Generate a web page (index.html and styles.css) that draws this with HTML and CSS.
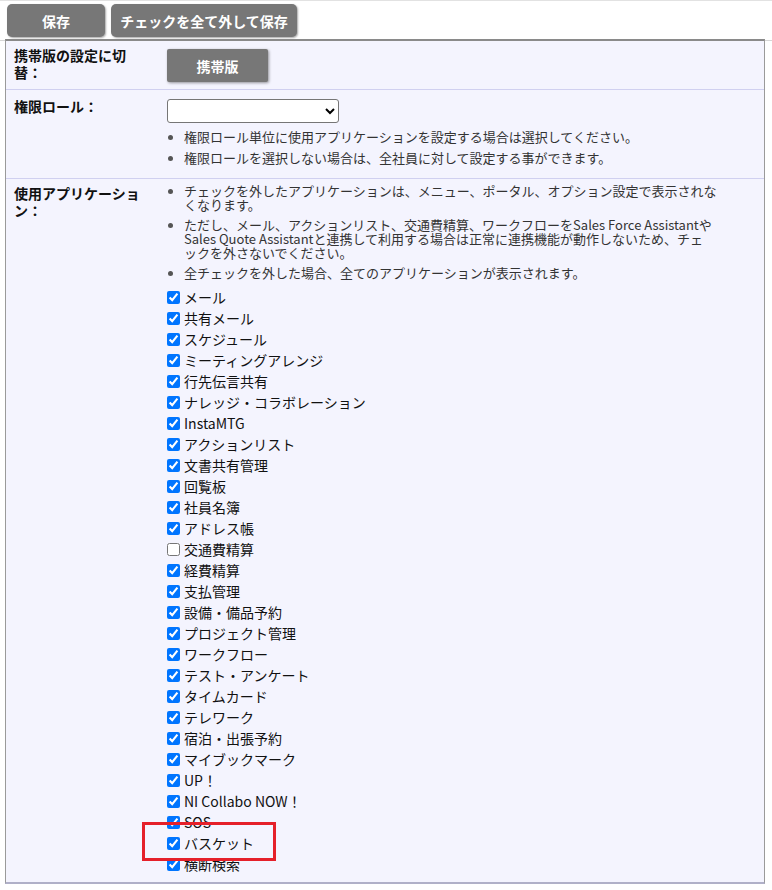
FILE: index.html
```html
<!DOCTYPE html>
<html lang="ja">
<head>
<meta charset="utf-8">
<title>アプリケーション設定</title>
<link rel="stylesheet" href="styles.css">
</head>
<body>
<div class="page">
  <div class="toolbar">
    <button class="btn btn-save" type="button">保存</button>
    <button class="btn btn-clear" type="button">チェックを全て外して保存</button>
  </div>
  <div class="form">
    <div class="row row-mobile">
      <div class="label">携帯版の設定に切替：</div>
      <div class="value">
        <button class="btn btn-mobile" type="button">携帯版</button>
      </div>
    </div>
    <div class="row row-role">
      <div class="label">権限ロール：</div>
      <div class="value">
        <select class="role-select"><option></option></select>
        <ul class="notes">
          <li>権限ロール単位に使用アプリケーションを設定する場合は選択してください。</li>
          <li>権限ロールを選択しない場合は、全社員に対して設定する事ができます。</li>
        </ul>
      </div>
    </div>
    <div class="row row-apps">
      <div class="label">使用アプリケーション：</div>
      <div class="value">
        <ul class="notes notes-apps">
          <li>チェックを外したアプリケーションは、メニュー、ポータル、オプション設定で表示されな<br>くなります。</li>
          <li>ただし、メール、アクションリスト、交通費精算、ワークフローをSales Force Assistantや<br>Sales Quote Assistantと連携して利用する場合は正常に連携機能が動作しないため、チェ<br>ックを外さないでください。</li>
          <li>全チェックを外した場合、全てのアプリケーションが表示されます。</li>
        </ul>
        <ul class="apps">
          <li><label><input type="checkbox" checked>メール</label></li>
          <li><label><input type="checkbox" checked>共有メール</label></li>
          <li><label><input type="checkbox" checked>スケジュール</label></li>
          <li><label><input type="checkbox" checked>ミーティングアレンジ</label></li>
          <li><label><input type="checkbox" checked>行先伝言共有</label></li>
          <li><label><input type="checkbox" checked>ナレッジ・コラボレーション</label></li>
          <li><label><input type="checkbox" checked>InstaMTG</label></li>
          <li><label><input type="checkbox" checked>アクションリスト</label></li>
          <li><label><input type="checkbox" checked>文書共有管理</label></li>
          <li><label><input type="checkbox" checked>回覧板</label></li>
          <li><label><input type="checkbox" checked>社員名簿</label></li>
          <li><label><input type="checkbox" checked>アドレス帳</label></li>
          <li><label><input type="checkbox">交通費精算</label></li>
          <li><label><input type="checkbox" checked>経費精算</label></li>
          <li><label><input type="checkbox" checked>支払管理</label></li>
          <li><label><input type="checkbox" checked>設備・備品予約</label></li>
          <li><label><input type="checkbox" checked>プロジェクト管理</label></li>
          <li><label><input type="checkbox" checked>ワークフロー</label></li>
          <li><label><input type="checkbox" checked>テスト・アンケート</label></li>
          <li><label><input type="checkbox" checked>タイムカード</label></li>
          <li><label><input type="checkbox" checked>テレワーク</label></li>
          <li><label><input type="checkbox" checked>宿泊・出張予約</label></li>
          <li><label><input type="checkbox" checked>マイブックマーク</label></li>
          <li><label><input type="checkbox" checked>UP！</label></li>
          <li><label><input type="checkbox" checked>NI Collabo NOW！</label></li>
          <li><label><input type="checkbox" checked>SOS</label></li>
          <li class="highlighted"><label><input type="checkbox" checked>バスケット</label></li>
          <li><label><input type="checkbox" checked>横断検索</label></li>
        </ul>
      </div>
    </div>
  </div>
</div>
</body>
</html>
```

FILE: styles.css
```css
html, body {
  margin: 0;
  padding: 0;
  background: #ffffff;
}

body {
  font-family: "Noto Sans CJK JP", "Noto Sans", sans-serif;
  font-size: 13px;
  color: #222;
  width: 772px;
  height: 890px;
  overflow: hidden;
}

.page {
  border-top: 1px solid #e2e2e2;
}

.toolbar {
  display: flex;
  gap: 6px;
  padding: 3px 0 0 7px;
  height: 36px;
  border-bottom: 1px solid #d6d6d6;
  box-sizing: content-box;
}

.btn {
  background: #777777;
  color: #ffffff;
  border: none;
  border-radius: 5px;
  font-family: "Noto Sans CJK JP", "Noto Sans", sans-serif;
  font-size: 14px;
  font-weight: bold;
  height: 33px;
  padding: 0;
  box-shadow: 1px 1px 2px rgba(0, 0, 0, 0.35);
  cursor: pointer;
}

.btn-save { width: 98px; }
.btn-clear { width: 186px; }

.btn-mobile {
  width: 101px;
  border-radius: 2px;
  font-weight: bold;
  font-size: 14px;
  box-shadow: 1px 1px 3px rgba(0, 0, 0, 0.4);
}

.form {
  margin-left: 5px;
  width: 760px;
  box-sizing: border-box;
  background: #f4f4fe;
  border-top: 2px solid #8a8a8a;
  border-left: 1px solid #9a9a9a;
  border-right: 1px solid #9a9a9a;
  border-bottom: 2px solid #b0b0c8;
  height: 845px;
  margin-top: -2px;
  position: relative;
}

.row {
  display: grid;
  grid-template-columns: 161px 1fr;
  border-bottom: 1px solid #d0d0f0;
}

.row:last-child {
  border-bottom: none;
}

.label {
  padding-left: 8px;
  width: 130px;
  font-size: 14px;
  font-weight: bold;
  line-height: 17px;
  color: #111;
}

.value {
  color: #222;
}

.row-mobile {
  height: 48px;
}
.row-mobile .label { padding-top: 6px; }
.row-mobile .value { padding-top: 8px; }

.row-role {
  height: 88px;
}
.row-role .label { padding-top: 8px; }
.row-role .value { padding-top: 9px; }

.role-select {
  width: 172px;
  height: 24px;
  border: 1px solid #767676;
  border-radius: 3px;
  background: #ffffff;
  margin: 0;
  display: block;
  font-family: "Noto Sans CJK JP", sans-serif;
  font-size: 13px;
}

.notes {
  margin: 7px 0 0 0;
  padding: 0 0 0 17px;
  list-style: disc;
  color: #333;
}

.notes li {
  line-height: 13px;
  margin-bottom: 8px;
}

.notes li::marker {
  color: #555;
  font-size: 12px;
}

.row-apps .label { padding-top: 6px; }
.row-apps .value { padding-top: 3px; }

.notes-apps {
  margin-top: 2px;
}

.notes-apps li {
  line-height: 14px;
  margin-bottom: 6px;
}

.apps {
  list-style: none;
  margin: 7px 0 0 0;
  padding: 0;
}

.apps li {
  height: 21px;
  display: flex;
  align-items: center;
  font-size: 14px;
  color: #111;
}

.apps label {
  display: flex;
  align-items: center;
  line-height: 21px;
}

.apps input {
  width: 13px;
  height: 13px;
  margin: 0 4px 0 0;
}

.highlighted {
  position: relative;
}

.highlighted::after {
  content: "";
  position: absolute;
  left: -25px;
  top: -11px;
  width: 128px;
  height: 33px;
  border: 3px solid #e5202a;
  pointer-events: none;
}
```
